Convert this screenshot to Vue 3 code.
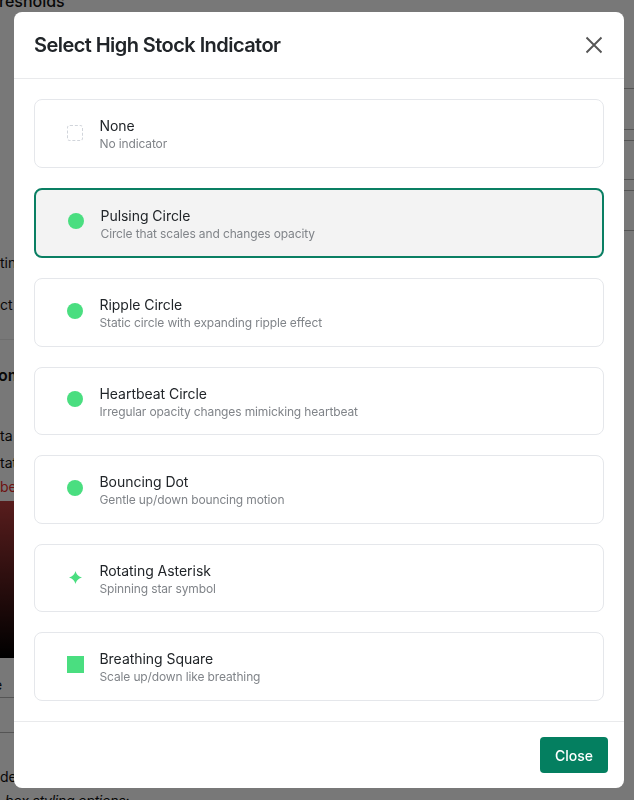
<script setup>
const options = [
  { name: 'None', desc: 'No indicator', icon: 'none' },
  { name: 'Pulsing Circle', desc: 'Circle that scales and changes opacity', icon: 'circle', selected: true },
  { name: 'Ripple Circle', desc: 'Static circle with expanding ripple effect', icon: 'circle' },
  { name: 'Heartbeat Circle', desc: 'Irregular opacity changes mimicking heartbeat', icon: 'circle' },
  { name: 'Bouncing Dot', desc: 'Gentle up/down bouncing motion', icon: 'circle' },
  { name: 'Rotating Asterisk', desc: 'Spinning star symbol', icon: 'star' },
  { name: 'Breathing Square', desc: 'Scale up/down like breathing', icon: 'square' }
]
</script>

<template>
  <div class="page">
    <div class="left">
      <div class="t heading r0">resholds</div>
      <div class="t r1">tin</div>
      <div class="t r2">ct</div>
      <div class="rule faint r3"></div>
      <div class="t heading r4">om</div>
      <div class="t r5">ta</div>
      <div class="t r6">tat</div>
      <div class="t red r7">be</div>
      <div class="photo"></div>
      <div class="t r8">e</div>
      <div class="rule r9"></div>
      <div class="rule r10"></div>
      <div class="t r11">de</div>
      <div class="t em r12">box styling options:</div>
    </div>
    <div class="right">
      <div class="rule a"></div>
      <div class="rule b"></div>
      <div class="rule c"></div>
      <div class="rule d"></div>
      <div class="rule e"></div>
      <div class="rule f"></div>
    </div>
  </div>

  <div class="overlay">
    <div class="modal">
      <header class="head">
        <h2>Select High Stock Indicator</h2>
        <button class="x" aria-label="Close">
          <svg width="18" height="18" viewBox="0 0 18 18" fill="none" stroke="#555" stroke-width="1.9">
            <path d="M1.5 1.5 16.5 16.5M16.5 1.5 1.5 16.5" />
          </svg>
        </button>
      </header>
      <div class="body">
        <div v-for="o in options" :key="o.name" class="item" :class="{ selected: o.selected }">
          <div class="icon">
            <span v-if="o.icon === 'none'" class="dashed"></span>
            <span v-else-if="o.icon === 'circle'" class="circle"></span>
            <span v-else-if="o.icon === 'square'" class="square"></span>
            <svg v-else width="13" height="13" viewBox="0 0 12 12" fill="#4ade80">
              <path d="M6 0 C6.9 3.2 8.4 4.9 12 6 C8.4 7.1 6.9 8.8 6 12 C5.1 8.8 3.6 7.1 0 6 C3.6 4.9 5.1 3.2 6 0Z" />
            </svg>
          </div>
          <div class="text">
            <div class="name">{{ o.name }}</div>
            <div class="desc">{{ o.desc }}</div>
          </div>
        </div>
      </div>
      <footer class="foot">
        <button class="close">Close</button>
      </footer>
    </div>
  </div>
</template>

<style>
html, body { margin: 0; background: #f0f0f0; overflow: hidden; }
</style>

<style scoped>
.page {
  height: 800px;
  overflow: hidden;
  display: flex;
  justify-content: space-between;
  font-family: Inter, "Liberation Sans", sans-serif;
  color: #111;
}
.left { width: 20px; }
.right { width: 12px; }
.t { font-size: 14px; line-height: 20px; height: 20px; white-space: nowrap; }
.heading { font-size: 16px; font-weight: 500; }
.r4.heading { font-weight: 600; }
.red { color: #dc2626; }
.em { font-style: italic; margin-left: 5px; letter-spacing: -0.25px; }
.rule { height: 1px; background: #aaa; }
.faint { background: #ddd; }
.photo { height: 157px; margin-top: 4px; background: linear-gradient(#b03a3a, #000); }
.r0 { margin-top: -9px; margin-left: -1px; }
.r1 { margin-top: 242px; }
.r2 { margin-top: 22px; }
.r3 { margin-top: 24px; }
.r4 { margin-top: 25px; margin-left: -2px; }
.r5 { margin-top: 41px; }
.r6 { margin-top: 7px; }
.r7 { margin-top: 4px; }
.r8 { margin-top: 17px; margin-left: -6px; }
.r9 { margin-top: 2px; }
.r10 { margin-top: 34px; }
.r11 { margin-top: 34px; }
.r12 { margin-top: 4px; }
.a { margin-top: 88px; }
.b { margin-top: 40px; }
.c { margin-top: 10px; }
.d { margin-top: 38px; }
.e { margin-top: 10px; }
.f { margin-top: 39px; }

.overlay {
  position: fixed;
  inset: 0;
  background: rgba(0, 0, 0, 0.5);
  padding: 12px 10px 12px 14px;
  box-sizing: border-box;
  font-family: Inter, "Liberation Sans", sans-serif;
}
.modal {
  height: 776px;
  background: #fff;
  border-radius: 8px;
  display: flex;
  flex-direction: column;
  overflow: hidden;
}
.head {
  height: 67px;
  box-sizing: border-box;
  border-bottom: 1px solid #e9eaec;
  padding: 0 20px;
  display: flex;
  align-items: center;
  justify-content: space-between;
  flex: none;
}
h2 {
  margin: 0;
  font-size: 20px;
  font-weight: 600;
  letter-spacing: -0.56px;
  color: #212529;
}
.x {
  border: 0;
  background: none;
  padding: 0;
  margin-right: 1px;
  display: flex;
  cursor: pointer;
}
.body {
  flex: 1;
  padding: 20px 20px;
  display: flex;
  flex-direction: column;
  gap: 20px;
}
.item {
  height: 68.5px;
  box-sizing: border-box;
  border: 1px solid #e5e7eb;
  border-radius: 8px;
  padding: 0 16px;
  display: flex;
  align-items: center;
  background: #fff;
}
.item.selected {
  height: 70.5px;
  border: 2px solid #0a7f63;
  background: #f3f3f3;
}
.icon {
  width: 48px;
  flex: none;
  display: flex;
  align-items: center;
  justify-content: center;
}
.circle {
  width: 16px;
  height: 16px;
  margin-bottom: 3px;
  border-radius: 50%;
  background: #4ade80;
}
.square {
  width: 17px;
  height: 17px;
  margin-bottom: 3px;
  background: #4ade80;
}
.dashed {
  width: 16px;
  height: 16px;
  box-sizing: border-box;
  border: 1px dashed #d1d5db;
  border-radius: 3px;
}
.text { margin-left: 0.5px; padding-top: 2px; }
.name {
  font-size: 14px;
  line-height: 20px;
  letter-spacing: -0.04px;
  color: #212529;
}
.desc {
  font-size: 12px;
  line-height: 16px;
  letter-spacing: -0.13px;
  color: #808489;
}
.foot {
  flex: none;
  height: 67px;
  box-sizing: border-box;
  border-top: 1px solid #e9eaec;
  padding: 15px 16px 0;
  display: flex;
  justify-content: flex-end;
  align-items: flex-start;
}
.close {
  width: 68px;
  height: 36px;
  border: 0;
  border-radius: 4px;
  background: #047f60;
  color: #fff;
  font-family: inherit;
  font-size: 14px;
  font-weight: 500;
  cursor: pointer;
}
</style>
